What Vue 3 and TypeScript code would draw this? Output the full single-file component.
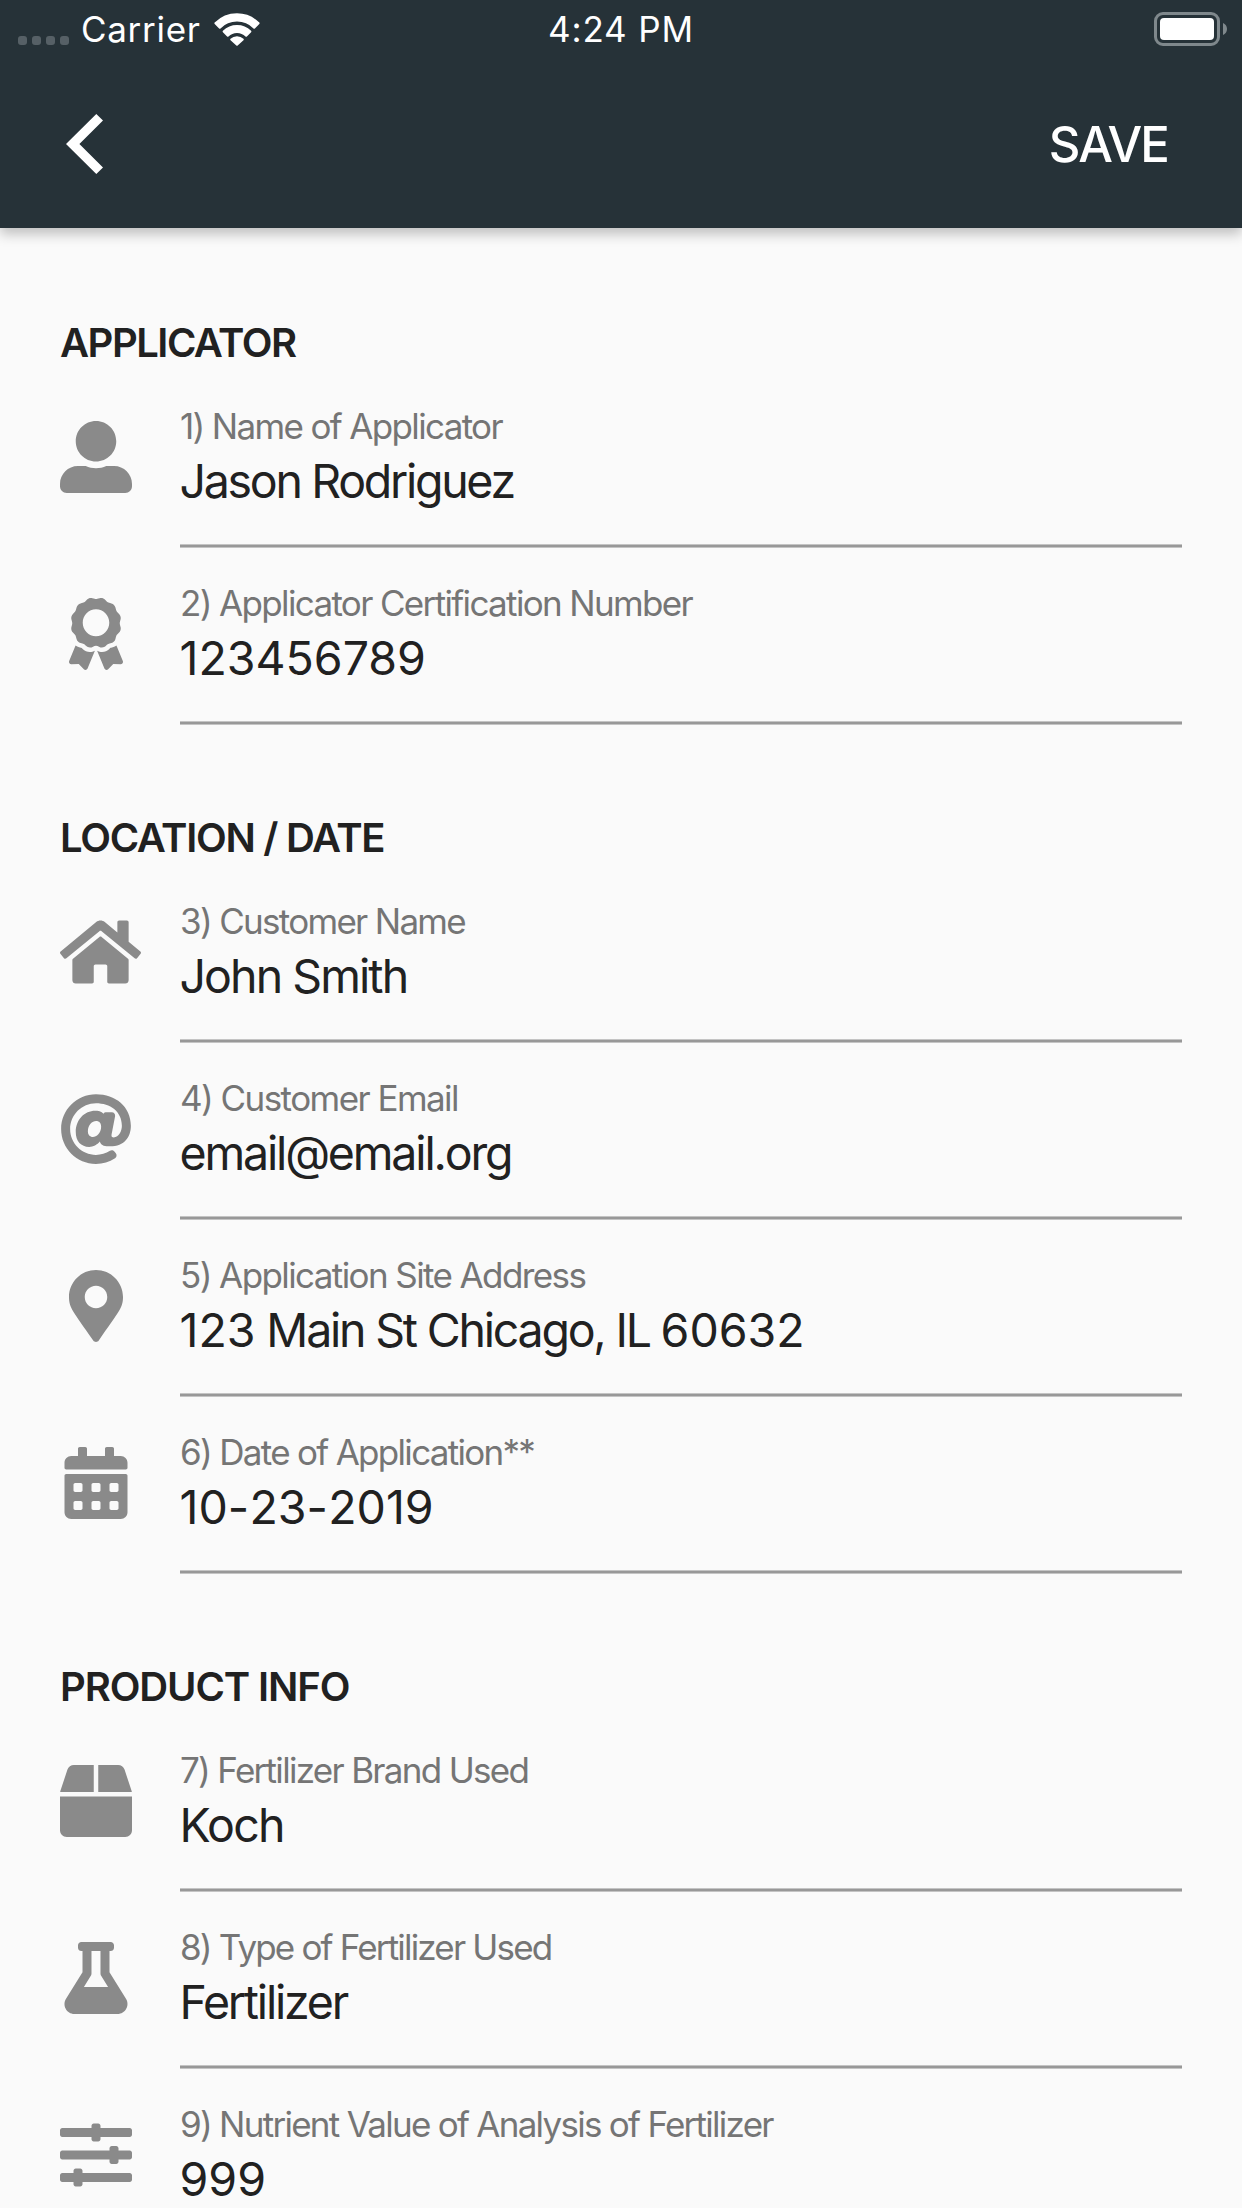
<script setup lang="ts">
interface Icon {
  width: number
  path: string
}

interface Field {
  icon: Icon
  label: string
  value: string
  labelTracking: number
  valueTracking: number
}

interface Section {
  title: string
  tracking: number
  fields: Field[]
}

const user: Icon = {
  width: 512,
  path: 'M256 288c79.5 0 144-64.5 144-144S335.5 0 256 0 112 64.5 112 144s64.5 144 144 144zm128 32h-55.1c-22.2 10.2-46.9 16-72.9 16s-50.6-5.8-72.9-16H128C57.3 320 0 377.3 0 448v16c0 26.5 21.5 48 48 48h416c26.5 0 48-21.5 48-48v-16c0-70.7-57.3-128-128-128z',
}

const award: Icon = {
  width: 384,
  path: 'M97.12 362.63c-8.69-8.69-4.16-6.24-25.12-11.85-9.51-2.55-17.87-7.45-25.43-13.32L1.2 448.7c-4.39 10.77 3.81 22.47 15.43 22.03l52.69-2.01L105.56 507c8 8.44 22.04 5.81 26.43-4.96l52.05-127.62c-10.84 6.04-22.87 9.58-35.31 9.58-19.5 0-37.82-7.59-51.61-21.37zM382.8 448.7l-45.37-111.24c-7.56 5.88-15.92 10.77-25.43 13.32-21.07 5.64-16.45 3.18-25.12 11.85-13.79 13.78-32.12 21.37-51.62 21.37-12.44 0-24.47-3.55-35.31-9.58L252 502.04c4.39 10.77 18.44 13.4 26.43 4.96l36.25-38.28 52.69 2.01c11.62.44 19.82-11.27 15.43-22.03zM263 340c15.28-15.55 17.03-14.21 38.79-20.14 13.89-3.79 24.75-14.84 28.47-28.98 7.48-28.4 5.54-24.97 25.95-45.75 10.17-10.35 14.14-25.44 10.42-39.58-7.47-28.38-7.48-24.42 0-52.83 3.72-14.14-.25-29.23-10.42-39.58-20.41-20.78-18.47-17.36-25.95-45.75-3.72-14.14-14.58-25.19-28.47-28.98-27.88-7.61-24.52-5.62-44.95-26.41-10.17-10.35-25-14.4-38.89-10.61-27.87 7.6-23.98 7.61-51.9 0-13.89-3.79-28.72.25-38.89 10.61-20.41 20.78-17.05 18.8-44.94 26.41-13.89 3.79-24.75 14.84-28.47 28.98-7.47 28.39-5.54 24.97-25.95 45.75-10.17 10.35-14.15 25.44-10.42 39.58 7.47 28.36 7.48 24.4 0 52.82-3.72 14.14.25 29.23 10.42 39.59 20.41 20.78 18.47 17.35 25.95 45.75 3.72 14.14 14.58 25.19 28.47 28.98C104.6 325.96 106.27 325 121 340c13.23 13.47 33.84 15.88 49.74 5.82a39.676 39.676 0 0 1 42.53 0c15.89 10.06 36.5 7.65 49.73-5.82zM97.66 175.96c0-53.03 42.24-96.02 94.34-96.02s94.34 42.99 94.34 96.02-42.24 96.02-94.34 96.02-94.34-42.99-94.34-96.02z',
}

const home: Icon = {
  width: 576,
  path: 'M488 312.7V456c0 13.3-10.7 24-24 24H348c-6.6 0-12-5.4-12-12V356c0-6.6-5.4-12-12-12h-72c-6.6 0-12 5.4-12 12v112c0 6.6-5.4 12-12 12H112c-13.3 0-24-10.7-24-24V312.7c0-3.6 1.6-7 4.4-9.3l188-154.8c4.4-3.6 10.8-3.6 15.3 0l188 154.8c2.7 2.3 4.3 5.7 4.3 9.3zm83.6-60.9L488 183V44.4c0-6.6-5.4-12-12-12h-56c-6.6 0-12 5.4-12 12V117l-89.5-73.7c-17.7-14.6-43.3-14.6-61 0L4.4 251.8c-5.1 4.2-5.8 11.8-1.6 16.9l25.5 31c4.2 5.1 11.8 5.8 16.9 1.6l235.2-193.7c4.4-3.6 10.8-3.6 15.3 0l235.2 193.7c5.1 4.2 12.7 3.5 16.9-1.6l25.5-31c4.2-5.2 3.4-12.7-1.7-16.9z',
}

const at: Icon = {
  width: 512,
  path: 'M256 8C118.941 8 8 118.919 8 256c0 137.059 110.919 248 248 248 48.154 0 95.342-14.14 135.408-40.223 12.005-7.815 14.625-24.288 5.552-35.372l-10.177-12.433c-7.671-9.371-21.179-11.667-31.373-5.129C325.92 429.757 291.314 440 256 440c-101.458 0-184-82.542-184-184S154.542 72 256 72c100.139 0 184 57.619 184 160 0 38.786-21.093 79.742-58.17 83.693-17.349-.454-16.91-12.857-13.476-30.024l23.433-121.11C394.653 149.75 383.308 136 368.225 136h-44.981a13.518 13.518 0 0 0-13.432 11.993l-.01.092c-14.697-17.901-40.448-21.775-59.971-21.775-74.58 0-137.831 62.234-137.831 151.46 0 65.303 36.785 105.87 96 105.87 26.984 0 57.369-15.637 74.991-38.333 9.522 34.104 40.613 34.104 70.71 34.104C462.609 379.41 504 307.798 504 232 504 95.653 394.023 8 256 8zm-21.68 304.43c-22.249 0-36.07-15.623-36.07-40.771 0-44.993 30.779-72.729 58.63-72.729 22.292 0 35.601 15.241 35.601 40.77 0 45.061-33.875 72.73-58.161 72.73z',
}

const marker: Icon = {
  width: 384,
  path: 'M172.268 501.67C26.97 291.031 0 269.413 0 192 0 85.961 85.961 0 192 0s192 85.961 192 192c0 77.413-26.97 99.031-172.268 309.67-9.535 13.774-29.93 13.773-39.464 0zM192 272c44.183 0 80-35.817 80-80s-35.817-80-80-80-80 35.817-80 80 35.817 80 80 80z',
}

/* One rounded day cell, cut out of the calendar body. */
const day = (x: number, y: number): string =>
  `M${x + 12} ${y}h40c6.6 0 12 5.4 12 12v40c0 6.6-5.4 12-12 12h-40c-6.6 0-12-5.4-12-12v-40c0-6.6 5.4-12 12-12z`

const days = [256, 384].flatMap((y) => [64, 192, 320].map((x) => day(x, y))).join('')

const calendar: Icon = {
  width: 448,
  path:
    'M0 464c0 26.5 21.5 48 48 48h352c26.5 0 48-21.5 48-48V204c0-6.6-5.4-12-12-12H12c-6.6 0-12 5.4-12 12v260zM400 64h-48V12c0-6.6-5.4-12-12-12h-40c-6.6 0-12 5.4-12 12v52H160V12c0-6.6-5.4-12-12-12h-40c-6.6 0-12 5.4-12 12v52H48C21.5 64 0 85.5 0 112v36c0 6.6 5.4 12 12 12h424c6.6 0 12-5.4 12-12v-36c0-26.5-21.5-48-48-48z' +
    days,
}

const box: Icon = {
  width: 512,
  path: 'M509.5 184.6L458.9 32.8C452.4 13.2 434.1 0 413.4 0H272v192h238.7c-.4-2.5-.4-5-1.2-7.4zM240 0H98.6c-20.7 0-39 13.2-45.5 32.8L2.5 184.6c-.8 2.4-.8 4.9-1.2 7.4H240V0zM0 224v240c0 26.5 21.5 48 48 48h416c26.5 0 48-21.5 48-48V224H0z',
}

const flask: Icon = {
  width: 448,
  path: 'M437.2 403.5L320 215V64h8c13.3 0 24-10.7 24-24V24c0-13.3-10.7-24-24-24H120c-13.3 0-24 10.7-24 24v16c0 13.3 10.7 24 24 24h8v151L10.8 403.5C-18.5 450.6 15.3 512 70.9 512h306.2c55.7 0 89.4-61.5 60.1-108.5zM137.9 320l48.2-77.6c3.7-5.2 5.8-11.6 5.8-18.4V64h64v160c0 6.9 2.2 13.2 5.8 18.4l48.2 77.6h-172z',
}

const sliders: Icon = {
  width: 512,
  path: 'M496 384H160v-16c0-8.8-7.2-16-16-16h-32c-8.8 0-16 7.2-16 16v16H16c-8.8 0-16 7.2-16 16v32c0 8.8 7.2 16 16 16h80v16c0 8.8 7.2 16 16 16h32c8.8 0 16-7.2 16-16v-16h336c8.8 0 16-7.2 16-16v-32c0-8.8-7.2-16-16-16zm0-160h-80v-16c0-8.8-7.2-16-16-16h-32c-8.8 0-16 7.2-16 16v16H16c-8.8 0-16 7.2-16 16v32c0 8.8 7.2 16 16 16h336v16c0 8.8 7.2 16 16 16h32c8.8 0 16-7.2 16-16v-16h80c8.8 0 16-7.2 16-16v-32c0-8.8-7.2-16-16-16zm0-160H288V48c0-8.8-7.2-16-16-16h-32c-8.8 0-16 7.2-16 16v16H16C7.2 64 0 71.2 0 80v32c0 8.8 7.2 16 16 16h208v16c0 8.8 7.2 16 16 16h32c8.8 0 16-7.2 16-16v-16h208c8.8 0 16-7.2 16-16V80c0-8.8-7.2-16-16-16z',
}

const iconWidth = (icon: Icon): number => Math.max(512, icon.width)

/* Digits keep their natural spacing while letters are tracked tighter. */
const parts = (text: string): { text: string; digits: boolean }[] =>
  text
    .split(/(\d+)/)
    .filter((part) => part !== '')
    .map((part) => ({ text: part, digits: /^\d/.test(part) }))

const sections: Section[] = [
  {
    title: 'APPLICATOR',
    tracking: -1.5,
    fields: [
      { icon: user, label: '1) Name of Applicator', value: 'Jason Rodriguez', labelTracking: -1.66, valueTracking: -2.3 },
      { icon: award, label: '2) Applicator Certification Number', value: '123456789', labelTracking: -1.65, valueTracking: 0 },
    ],
  },
  {
    title: 'LOCATION / DATE',
    tracking: -1.3,
    fields: [
      { icon: home, label: '3) Customer Name', value: 'John Smith', labelTracking: -1.7, valueTracking: -1.93 },
      { icon: at, label: '4) Customer Email', value: 'email@email.org', labelTracking: -1.56, valueTracking: -2.17 },
      { icon: marker, label: '5) Application Site Address', value: '123 Main St Chicago, IL 60632', labelTracking: -1.6, valueTracking: -2.22 },
      { icon: calendar, label: '6) Date of Application**', value: '10-23-2019', labelTracking: -1.7, valueTracking: 0.3 },
    ],
  },
  {
    title: 'PRODUCT INFO',
    tracking: -1.1,
    fields: [
      { icon: box, label: '7) Fertilizer Brand Used', value: 'Koch', labelTracking: -1.7, valueTracking: -1.8 },
      { icon: flask, label: '8) Type of Fertilizer Used', value: 'Fertilizer', labelTracking: -1.82, valueTracking: -2.2 },
      { icon: sliders, label: '9) Nutrient Value of Analysis of Fertilizer', value: '999', labelTracking: -1.73, valueTracking: 0 },
    ],
  },
]
</script>

<template>
  <div class="screen">
    <header class="header">
      <div class="status">
        <div class="status-left">
          <div class="signal"><i v-for="n in 4" :key="n" class="dot"></i></div>
          <span class="carrier">Carrier</span>
          <svg class="wifi" width="48" height="36" viewBox="0 0 48 36">
            <g fill="#fff" stroke="#fff" stroke-width="2" stroke-linejoin="round">
              <path d="M2.4 11.3A30.5 30.5 0 0 1 45.6 11.3L41.2 15.7A24.3 24.3 0 0 0 6.8 15.7Z" />
              <path d="M10.6 19.5A19 19 0 0 1 37.4 19.5L33.2 23.7A13 13 0 0 0 14.8 23.7Z" />
              <path d="M18.2 27.5A8.4 8.4 0 0 1 29.8 27.5L24 32.8Z" />
            </g>
          </svg>
        </div>
        <span class="time">4:24 PM</span>
        <div class="status-right">
          <div class="battery"><div class="charge"></div></div>
          <svg class="nub" width="4" height="12" viewBox="0 0 4 12"><path d="M0 0C2.4 1 4 3.2 4 6S2.4 11 0 12Z" fill="#7f888c" /></svg>
        </div>
      </div>
      <nav class="toolbar">
        <svg class="back" width="37" height="60" viewBox="0 0 37 60">
          <path d="M30.3 0L37 6.6L13.4 30L37 53.4L30.3 60L0 30Z" fill="#fff" />
        </svg>
        <span class="save">SAVE</span>
      </nav>
    </header>

    <main class="form">
      <section v-for="section in sections" :key="section.title">
        <h2 class="title" :style="{ letterSpacing: section.tracking + 'px' }">{{ section.title }}</h2>
        <div v-for="field in section.fields" :key="field.label" class="row">
          <div class="icon">
            <svg :width="(iconWidth(field.icon) * 72) / 512" height="72" :viewBox="`${(field.icon.width - iconWidth(field.icon)) / 2} 0 ${iconWidth(field.icon)} 512`">
              <path :d="field.icon.path" fill="#8a8a8a" fill-rule="evenodd" />
            </svg>
          </div>
          <div class="field">
            <div class="label" :style="{ letterSpacing: field.labelTracking + 'px' }">{{ field.label }}</div>
            <div class="value" :style="{ letterSpacing: field.valueTracking + 'px' }"><span v-for="(part, i) in parts(field.value)" :key="i" :class="{ digits: part.digits }">{{ part.text }}</span></div>
          </div>
        </div>
      </section>
    </main>
  </div>
</template>

<style>
body {
  background: #fafafa;
}
</style>

<style scoped>
.screen {
  width: 1242px;
  height: 2208px;
  overflow: hidden;
  display: flex;
  flex-direction: column;
  background: #fafafa;
  color: #212121;
  font-family: Inter, "Liberation Sans", sans-serif;
}

.header {
  flex: none;
  height: 228px;
  background: #263238;
  color: #fff;
  box-shadow: 0 6px 12px rgba(0, 0, 0, 0.24);
}

.status {
  height: 60px;
  display: grid;
  grid-template-columns: 1fr auto 1fr;
  font-size: 35px;
  line-height: 60px;
}

.status-left {
  display: flex;
  padding-left: 18px;
}

.signal {
  display: flex;
  gap: 5px;
  padding-top: 36px;
}

.dot {
  width: 9px;
  height: 9px;
  border-radius: 3px;
  background: #566066;
}

.carrier {
  margin: -1px 0 0 12px;
  letter-spacing: 0.7px;
}

.wifi {
  margin: 12px 0 0 12px;
}

.time {
  margin-top: -1px;
  letter-spacing: 0.9px;
}

.status-right {
  display: flex;
  justify-content: flex-end;
  padding: 12px 15px 0 0;
}

.battery {
  box-sizing: border-box;
  width: 66px;
  height: 34px;
  padding: 3px;
  border: 3px solid #7f888c;
  border-radius: 9px;
}

.charge {
  height: 22px;
  border-radius: 4px;
  background: #fff;
}

.nub {
  margin: 11px 0 0 3px;
}

.toolbar {
  height: 168px;
  display: flex;
  align-items: center;
  justify-content: space-between;
  padding: 0 74px 0 66px;
}

.save {
  padding-top: 2px;
  font-size: 49px;
  font-weight: 500;
  line-height: 60px;
  letter-spacing: -1.9px;
}

.form {
  padding: 2px 60px 0;
}

.title {
  margin: 0;
  height: 52px;
  padding-top: 89px;
  font-size: 40px;
  font-weight: 600;
  line-height: 48px;
  white-space: nowrap;
}

.row {
  display: flex;
  height: 177px;
}

.icon {
  flex: none;
  width: 72px;
  height: 72px;
  margin: 50px 48px 0 0;
  display: flex;
}

.icon svg {
  flex: none;
}

.field {
  flex: 1;
  display: flex;
  flex-direction: column;
  gap: 6px;
  padding-top: 34px;
  white-space: nowrap;
  background: linear-gradient(#c4c4c4 1px, #989898 1px, #989898 3px, #c4c4c4 3px) bottom / 100% 4px no-repeat;
}

.label {
  color: #757575;
  font-size: 35px;
  line-height: 42px;
}

.value {
  margin-left: -0.5px;
  font-size: 46.5px;
  line-height: 56px;
}

.digits {
  letter-spacing: 0;
}
</style>
